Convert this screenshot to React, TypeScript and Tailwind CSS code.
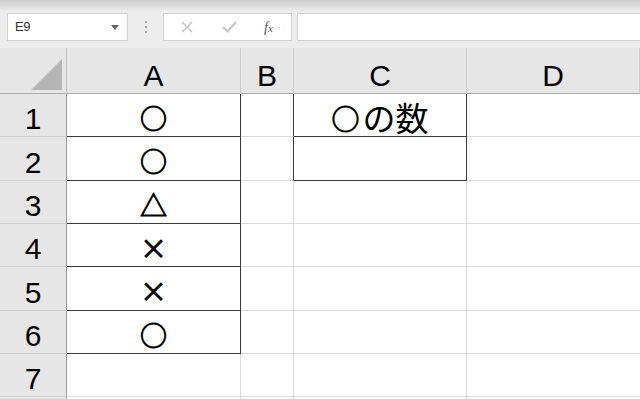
import React from 'react';

const GRID = 'border-[#d9d9d9]';
const DARK = 'border-[#3a3a3a]';

const cols = ['A', 'B', 'C', 'D'];
const rowHeights = [43, 44, 43, 43, 44, 43, 43, 20];
const aValues = ['○', '○', '△', '×', '×', '○', '', ''];

const Toolbar: React.FC = () => (
  <div className="h-[48px] bg-[#ececec] relative">
    <div className="absolute inset-x-0 top-0 h-[11px] bg-gradient-to-b from-[#cacaca] to-[#ececec]" />
    <div className="relative flex items-start pt-[13px] pl-[7px]">
      <div className="w-[121px] h-[28px] bg-white border border-[#d0d0d0] flex items-center justify-between pl-[7px] pr-[8px]">
        <span className="text-[13px] text-[#333] tracking-tight" style={{ fontFamily: '"Liberation Sans", Arial, sans-serif' }}>
          E9
        </span>
        <svg width="8" height="5" viewBox="0 0 8 5">
          <path d="M0 0 L8 0 L4 5 Z" fill="#666" />
        </svg>
      </div>
      <div className="w-[35px] h-[28px] flex flex-col items-center justify-center gap-[3px]">
        <span className="w-[2px] h-[2px] bg-[#aaa]" />
        <span className="w-[2px] h-[2px] bg-[#aaa]" />
        <span className="w-[2px] h-[2px] bg-[#aaa]" />
      </div>
      <div className="w-[129px] h-[28px] bg-white border border-[#d0d0d0] flex items-center">
        <div className="w-[44px] flex justify-center pl-[2px]">
          <svg width="12" height="12" viewBox="0 0 12 12">
            <path d="M1 1 L11 11 M11 1 L1 11" stroke="#c4c4c4" strokeWidth="1.6" />
          </svg>
        </div>
        <div className="w-[42px] flex justify-center">
          <svg width="15" height="12" viewBox="0 0 15 12">
            <path d="M1 6 L5.5 10.5 L14 1" stroke="#c4c4c4" strokeWidth="2" fill="none" />
          </svg>
        </div>
        <div className="flex-1 flex justify-center pr-[4px]">
          <span className="italic text-[14px] text-[#555]" style={{ fontFamily: '"Liberation Serif", "Times New Roman", serif' }}>
            f<span className="text-[11px]">x</span>
          </span>
        </div>
      </div>
      <div className="ml-[5px] flex-1 h-[28px] bg-white border-y border-l border-[#d0d0d0]" />
    </div>
  </div>
);

export default function App() {
  const head = '"Liberation Sans", Arial, sans-serif';
  const jp = '"Noto Sans CJK JP", "Noto Sans", sans-serif';

  return (
    <div className="w-[640px] h-[399px] overflow-hidden bg-white">
      <Toolbar />
      <div
        className="grid grid-cols-[67px_174px_53px_173px_1fr]"
        style={{ fontFamily: head }}
      >
        {/* header row */}
        <div className="h-[46px] bg-[#e6e6e6] border-r border-b border-r-[#c0c0c0] border-b-[#ababab] flex items-end justify-end pr-[4px] pb-[3px]">
          <svg width="31" height="31" viewBox="0 0 31 31">
            <path d="M31 0 L31 31 L0 31 Z" fill="#b5b5b5" />
          </svg>
        </div>
        {cols.map((c) => (
          <div
            key={c}
            className="h-[46px] bg-[#e6e6e6] border-r border-b border-r-[#cdcdcd] border-b-[#ababab] flex items-center justify-center pt-[10px] text-[30px] text-black"
          >
            {c}
          </div>
        ))}

        {rowHeights.map((h, i) => {
          const r = i + 1;
          const inA = r <= 6;
          const inC = r <= 2;
          return (
            <React.Fragment key={r}>
              <div
                className="bg-[#e6e6e6] border-r border-b border-r-[#9c9c9c] border-b-[#d2d2d2] flex items-center justify-center pt-[7px] text-[30px] text-black"
                style={{ height: h }}
              >
                {r <= 7 ? r : ''}
              </div>
              <div
                className={`border-r border-b flex items-center justify-center pt-[6px] text-[27px] text-black [-webkit-text-stroke:0.9px_#000] ${
                  inA ? DARK : GRID
                }`}
                style={{ height: h, fontFamily: jp }}
              >
                {aValues[i]}
              </div>
              <div
                className={`border-r border-b ${GRID} ${inC ? 'border-r-[#3a3a3a]' : ''}`}
                style={{ height: h }}
              />
              <div
                className={`border-r border-b flex items-center justify-center pt-[6px] text-[33px] text-black ${
                  inC ? DARK : GRID
                }`}
                style={{ height: h, fontFamily: jp }}
              >
                {r === 1 ? (
                  <>
                    <span className="text-[28px] mr-[3px] [-webkit-text-stroke:0.9px_#000]">○</span>の数
                  </>
                ) : (
                  ''
                )}
              </div>
              <div className={`border-b ${GRID}`} style={{ height: h }} />
            </React.Fragment>
          );
        })}
      </div>
    </div>
  );
}
